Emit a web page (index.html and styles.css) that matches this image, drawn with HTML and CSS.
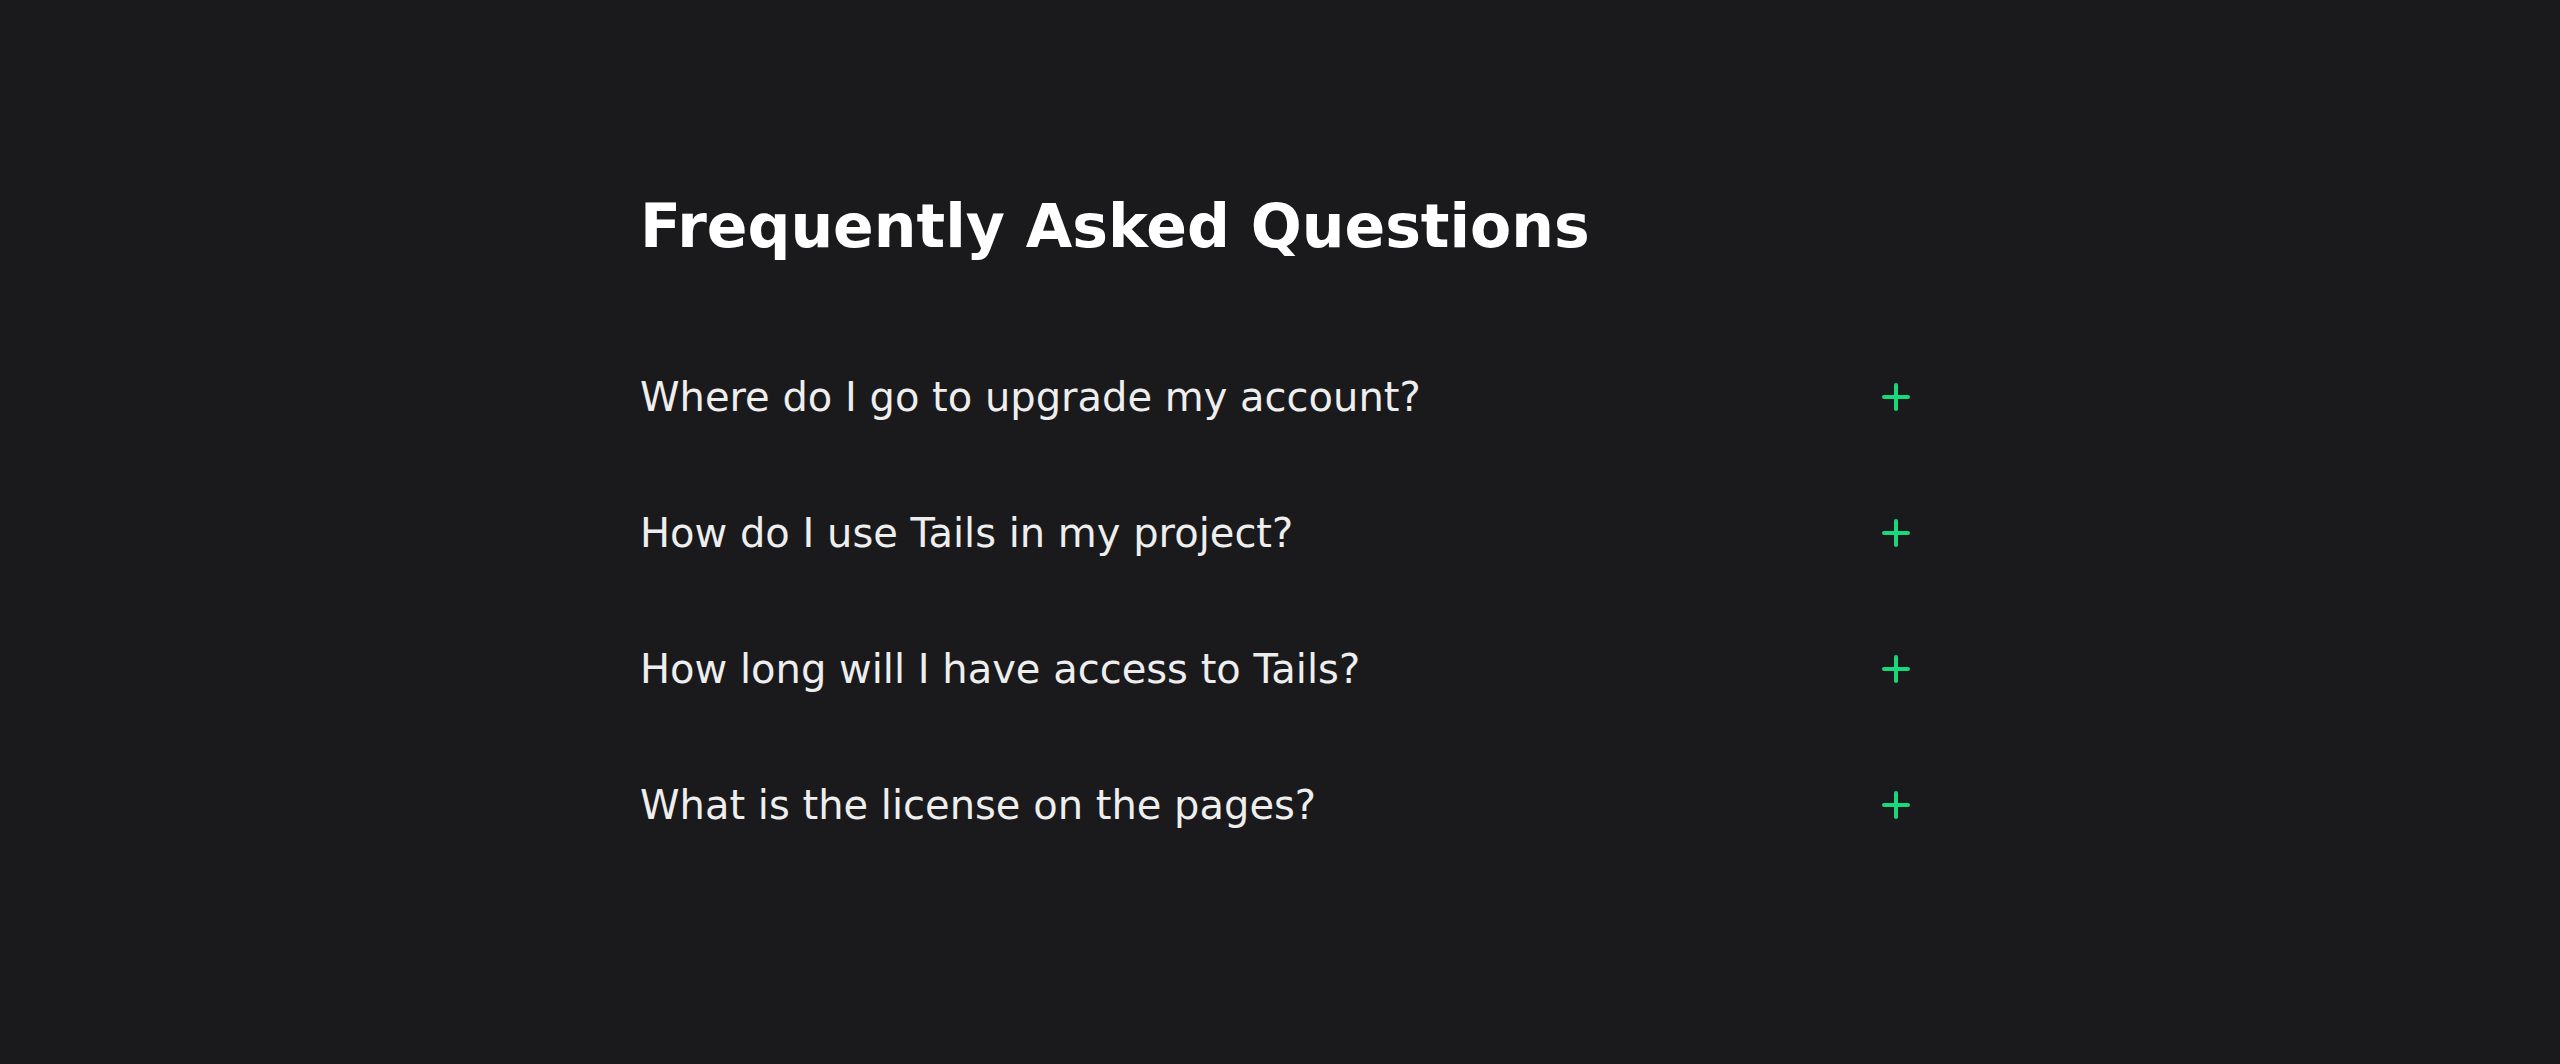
FILE: index.html
```html
<!DOCTYPE html>
<html lang="en">
<head>
<meta charset="utf-8">
<title>FAQ</title>
<link rel="stylesheet" href="styles.css">
</head>
<body>
<main class="faq">
  <h1 class="faq-title">Frequently Asked Questions</h1>
  <ul class="faq-list">
    <li class="faq-item"><span class="faq-q">Where do I go to upgrade my account?</span><span class="faq-icon"><svg width="28" height="28" viewBox="0 0 28 28"><path d="M14 2v24M2 14h24" stroke="#19d77b" stroke-width="4" stroke-linecap="round"/></svg></span></li>
    <li class="faq-item"><span class="faq-q">How do I use Tails in my project?</span><span class="faq-icon"><svg width="28" height="28" viewBox="0 0 28 28"><path d="M14 2v24M2 14h24" stroke="#19d77b" stroke-width="4" stroke-linecap="round"/></svg></span></li>
    <li class="faq-item"><span class="faq-q">How long will I have access to Tails?</span><span class="faq-icon"><svg width="28" height="28" viewBox="0 0 28 28"><path d="M14 2v24M2 14h24" stroke="#19d77b" stroke-width="4" stroke-linecap="round"/></svg></span></li>
    <li class="faq-item"><span class="faq-q">What is the license on the pages?</span><span class="faq-icon"><svg width="28" height="28" viewBox="0 0 28 28"><path d="M14 2v24M2 14h24" stroke="#19d77b" stroke-width="4" stroke-linecap="round"/></svg></span></li>
  </ul>
</main>
</body>
</html>
```
FILE: styles.css
```css
html, body {
  margin: 0;
  padding: 0;
  background: #1a1a1c;
  color: #ffffff;
  font-family: "DejaVu Sans", sans-serif;
}
.faq {
  max-width: 1280px;
  margin: 0 auto;
  padding-top: 190px;
}
.faq-title {
  margin: 0 0 67px;
  font-size: 60px;
  font-weight: 700;
  line-height: 1.2;
}
.faq-list {
  list-style: none;
  margin: 0;
  padding: 0;
}
.faq-item {
  display: flex;
  align-items: center;
  justify-content: space-between;
  height: 136px;
}
.faq-q {
  font-size: 40px;
  color: #eeeeee;
}
.faq-icon {
  width: 48px;
  height: 48px;
  display: flex;
  align-items: center;
  justify-content: center;
}
```
